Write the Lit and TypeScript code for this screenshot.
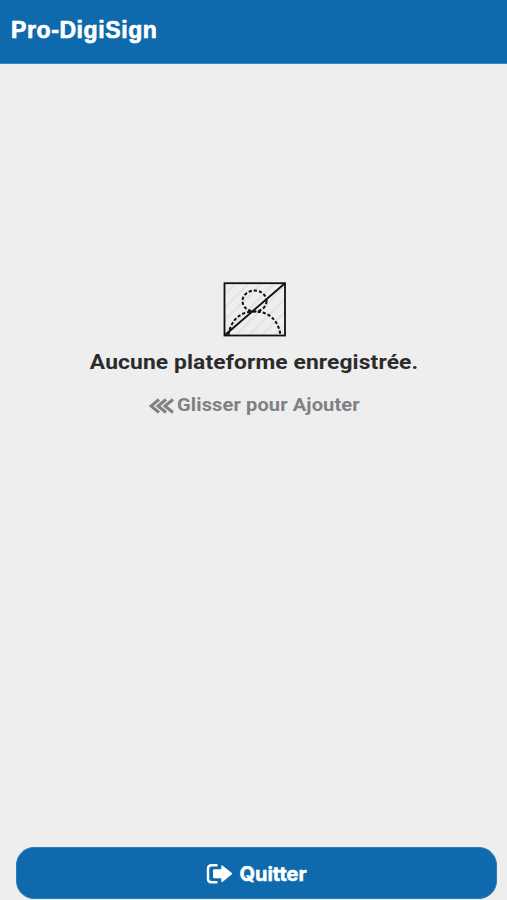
import { LitElement, html, css } from "lit";
import { customElement } from "lit/decorators.js";

@customElement("app-root")
export class AppRoot extends LitElement {
  static styles = css`
    :host {
      display: flex;
      flex-direction: column;
      height: 900px;
      box-sizing: border-box;
      background: #eeeeee;
      font-family: Roboto, "Liberation Sans", sans-serif;
      font-weight: 700;
      white-space: nowrap;
      overflow: hidden;
    }
    header {
      box-sizing: border-box;
      height: 64px;
      padding: 16px 0 0 11px;
      background: #0e6aac;
      border-bottom: 1px solid #3b8ac2;
      color: #fff;
    }
    h1 {
      margin: 0;
      font: 700 23px/28px "Liberation Sans", sans-serif;
      letter-spacing: 0.6px;
      -webkit-text-stroke: 0.7px #fff;
    }
    main {
      flex: 1;
      display: flex;
      flex-direction: column;
      align-items: center;
      padding-top: 218px;
    }
    .empty {
      display: block;
      margin-left: 2px;
    }
    .message {
      margin: 11px 0 0 2px;
      font-size: 20px;
      line-height: 28px;
      letter-spacing: 0.1px;
      transform: scaleX(1.14);
      color: #2b2b2b;
    }
    .hint {
      display: flex;
      align-items: center;
      gap: 3px;
      width: 211px;
      margin: 17px 0 0 1px;
      font-size: 18px;
      line-height: 24px;
      letter-spacing: 0.1px;
      color: #808184;
    }
    .hint svg {
      flex: none;
      margin-top: 2px;
    }
    .hint span {
      transform: scaleX(1.115);
      transform-origin: left center;
    }
    button {
      display: flex;
      align-items: center;
      justify-content: center;
      gap: 6px;
      flex: none;
      height: 52px;
      margin: 0 10px 1px 16px;
      padding: 1px 0 0;
      border: 1px solid #2a7fba;
      border-radius: 18px;
      background: #0e6aac;
      color: #fff;
      font: 700 20px/28px Inter, sans-serif;
      -webkit-text-stroke: 0.5px #fff;
    }
  `;

  render() {
    return html`
      <header><h1>Pro-DigiSign</h1></header>
      <main>
        <svg class="empty" width="64" height="55" viewBox="0 0 64 55" fill="none" stroke="#111">
          <g stroke="#e3e3e3" stroke-width="2">
            <path d="M2 12 12 2M2 25 25 2M2 38 38 2M2 51 51 2M13 53 62 4M26 53 62 17M39 53 62 30M52 53 62 43" />
          </g>
          <rect x="1.5" y="1.2" width="60.5" height="52.3" stroke-width="1.8" />
          <g stroke-width="2" stroke-dasharray="3.2 2">
            <ellipse cx="31.5" cy="19" rx="12" ry="10.5" />
            <path d="M5.5 53C8 37 18 29.5 31.5 29.5S55 37 57.5 53" />
          </g>
          <path d="M1.5 53.5 62 1.2" stroke-width="2" />
        </svg>
        <div class="message">Aucune plateforme enregistrée.</div>
        <div class="hint">
          <svg width="25" height="16" viewBox="0 0 25 16" fill="none" stroke="currentColor" stroke-width="3">
            <path d="M10 1.5 2 8l8 6.5M17 1.5 9 8l8 6.5M24 1.5 16 8l8 6.5" />
          </svg>
          <span>Glisser pour Ajouter</span>
        </div>
      </main>
      <button type="button">
        <svg width="27" height="22" viewBox="0 0 27 22" fill="none">
          <path d="M10.5 2.2H5.5Q2 2.2 2 5.7v10Q2 19.2 5.5 19.2h5" stroke="#fff" stroke-width="2.4" stroke-linecap="round" />
          <path d="M8.2 6.2h7.1V3q0-1.4 1.1-.5l9.2 7.3q1 .9 0 1.8l-9.2 7.3q-1.1.8-1.1-.6v-3.1H8.2q-1.2 0-1.2-1.2V7.4q0-1.2 1.2-1.2Z" fill="#fff" />
        </svg>
        <span>Quitter</span>
      </button>
    `;
  }
}
